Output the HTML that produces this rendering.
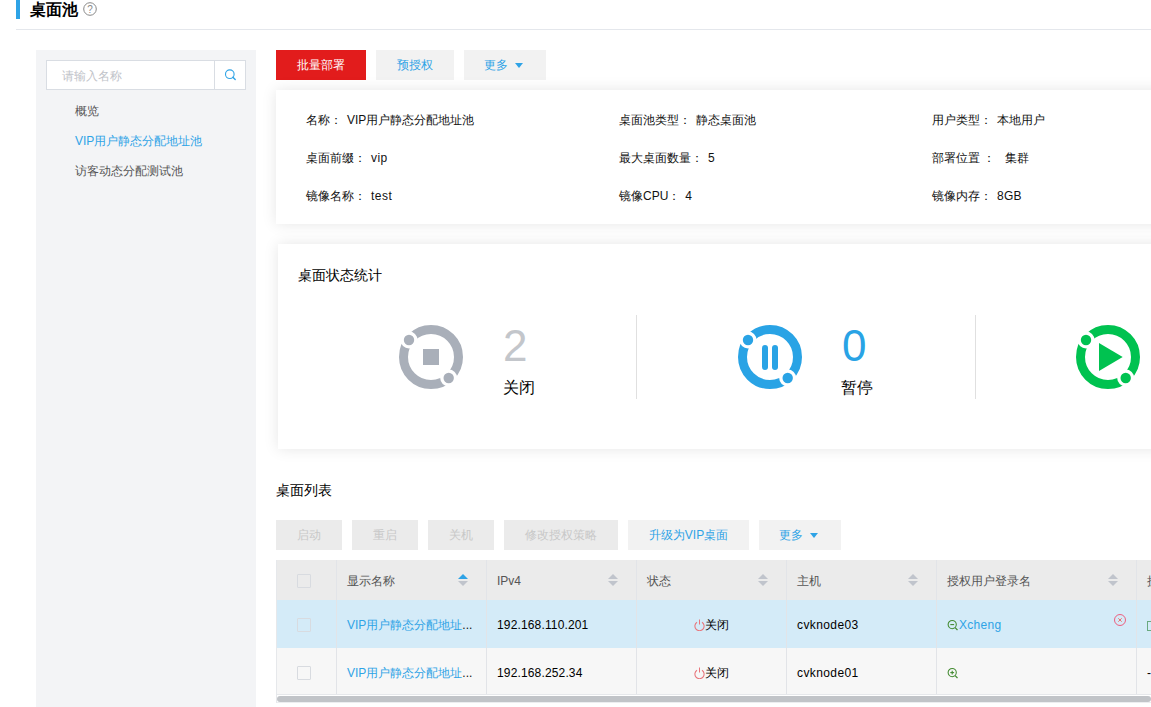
<!DOCTYPE html>
<html><head><meta charset="utf-8">
<style>
*{margin:0;padding:0;box-sizing:border-box;}
html,body{width:1151px;height:707px;overflow:hidden;background:#fff;font-family:"Liberation Sans",sans-serif;font-size:12px;color:#333;}
.a{position:absolute;white-space:nowrap;}
#bar{left:16px;top:0;width:4px;height:19px;background:#2ea3e6;}
#title{left:30px;top:0px;font-size:16px;font-weight:bold;color:#000;line-height:20px;}
#help{left:83px;top:2px;width:14px;height:14px;}
#hline{left:16px;top:29px;width:1135px;height:1px;background:#e4e7ec;}
#side{left:36px;top:50px;width:220px;height:657px;background:#f3f4f6;}
#search{left:46px;top:60px;width:200px;height:30px;background:#fff;border:1px solid #d9dde3;}
#search .ph{position:absolute;left:15px;top:7px;color:#bfc3c9;}
#search .btn{position:absolute;left:167px;top:0;width:31px;height:28px;border-left:1px solid #d9dde3;}
.nav{left:75px;color:#555;line-height:14px;}
.btn1{position:absolute;height:30px;line-height:30px;text-align:center;background:#f2f2f2;color:#2ea3e6;}
.btn2{position:absolute;top:520px;height:30px;line-height:30px;text-align:center;background:#ebebeb;color:#c8c8c8;}
.card{position:absolute;background:#fff;box-shadow:0 0 14px rgba(0,0,0,0.1);}
.lbl{color:#111;line-height:14px;}
.lbl b{font-weight:normal;}
.num{font-size:44px;line-height:44px;}
.st{font-size:16px;color:#000;line-height:18px;}
.vdiv{width:1px;height:84px;top:315px;background:#e0e0e0;}
.th{top:560px;height:40px;background:#ebebeb;}
.r1{top:600px;height:48px;background:#d4ebf8;}
.r2{top:648px;height:46px;background:#f7f7f7;}
.cd{width:1px;top:560px;height:135px;background:#e2e4e8;}
.cb{width:14px;height:14px;border:1px solid #d8dbe0;background:transparent;border-radius:1px;}
.ht{color:#555;line-height:14px;top:574px;}
.td{color:#000;line-height:14px;}
</style></head><body>
<div id="bar" class="a"></div>
<div id="title" class="a">桌面池</div>
<svg id="help" class="a" viewBox="0 0 14 14"><circle cx="7" cy="7" r="6.3" fill="none" stroke="#888" stroke-width="1"/><text x="7" y="10.5" font-size="10" text-anchor="middle" fill="#888" font-family="Liberation Sans">?</text></svg>
<div id="hline" class="a"></div>
<div id="side" class="a"></div>
<div id="search" class="a"><span class="ph">请输入名称</span><div class="btn"><svg width="31" height="28" viewBox="0 0 31 28"><circle cx="14.8" cy="13.2" r="4.3" fill="none" stroke="#2ea3e6" stroke-width="1.1"/><line x1="17.9" y1="16.3" x2="20.2" y2="18.6" stroke="#2ea3e6" stroke-width="1.4" stroke-linecap="round"/></svg></div></div>
<div class="a nav" style="top:104px;">概览</div>
<div class="a nav" style="top:134px;color:#2ea3e6;">VIP用户静态分配地址池</div>
<div class="a nav" style="top:164px;">访客动态分配测试池</div>

<div class="btn1" style="left:276px;top:50px;width:90px;background:#e21c1c;color:#fff;">批量部署</div>
<div class="btn1" style="left:376px;top:50px;width:78px;">预授权</div>
<div class="btn1" style="left:464px;top:50px;width:82px;text-indent:-3px;">更多 <svg width="8" height="5" style="vertical-align:1px;margin-left:3px;"><path d="M0 0H8L4 5Z" fill="#2ea3e6"/></svg></div>

<div class="card" style="left:276px;top:90px;width:1000px;height:134px;"></div>
<div class="a lbl" style="left:306px;top:113px;">名称：<span style="margin-left:5px">VIP用户静态分配地址池</span></div>
<div class="a lbl" style="left:306px;top:151px;">桌面前缀：<span style="margin-left:5px;letter-spacing:0.4px">vip</span></div>
<div class="a lbl" style="left:306px;top:189px;">镜像名称：<span style="margin-left:5px;letter-spacing:0.5px">test</span></div>
<div class="a lbl" style="left:619px;top:113px;">桌面池类型：<span style="margin-left:5px">静态桌面池</span></div>
<div class="a lbl" style="left:619px;top:151px;">最大桌面数量：<span style="margin-left:5px">5</span></div>
<div class="a lbl" style="left:619px;top:189px;">镜像CPU：<span style="margin-left:5px">4</span></div>
<div class="a lbl" style="left:932px;top:113px;">用户类型：<span style="margin-left:5px">本地用户</span></div>
<div class="a lbl" style="left:932px;top:151px;">部署位置 ：<span style="margin-left:10px">集群</span></div>
<div class="a lbl" style="left:932px;top:189px;">镜像内存：<span style="margin-left:5px;letter-spacing:0.3px">8GB</span></div>

<div class="card" style="left:278px;top:244px;width:1000px;height:205px;"></div>
<div class="a" style="left:298px;top:268px;font-size:14px;color:#000;line-height:14px;">桌面状态统计</div>

<!-- stop icon -->
<svg class="a" style="left:399px;top:325px;" width="64" height="64" viewBox="0 0 64 64">
<circle cx="32" cy="32" r="27.5" fill="none" stroke="#a9afb9" stroke-width="9"/>
<circle cx="10" cy="15" r="8.5" fill="#fff"/><circle cx="49.7" cy="53" r="8.5" fill="#fff"/>
<circle cx="10" cy="15" r="5.2" fill="#a9afb9"/><circle cx="49.7" cy="53" r="5.2" fill="#a9afb9"/>
<rect x="24" y="24" width="16" height="16" fill="#a9afb9"/>
</svg>
<div class="a num" style="left:503px;top:324px;color:#c3c6cb;">2</div>
<div class="a st" style="left:503px;top:379px;">关闭</div>
<div class="a vdiv" style="left:636px;"></div>

<!-- pause icon -->
<svg class="a" style="left:738px;top:325px;" width="64" height="64" viewBox="0 0 64 64">
<circle cx="32" cy="32" r="27.5" fill="none" stroke="#29a3e5" stroke-width="9"/>
<circle cx="10" cy="15" r="8.5" fill="#fff"/><circle cx="49.7" cy="53" r="8.5" fill="#fff"/>
<circle cx="10" cy="15" r="5.2" fill="#29a3e5"/><circle cx="49.7" cy="53" r="5.2" fill="#29a3e5"/>
<line x1="27" y1="23" x2="27" y2="42" stroke="#29a3e5" stroke-width="6" stroke-linecap="round"/>
<line x1="37" y1="23" x2="37" y2="42" stroke="#29a3e5" stroke-width="6" stroke-linecap="round"/>
</svg>
<div class="a num" style="left:842px;top:324px;color:#29a3e5;">0</div>
<div class="a st" style="left:841px;top:379px;">暂停</div>
<div class="a vdiv" style="left:975px;"></div>

<!-- play icon -->
<svg class="a" style="left:1076px;top:325px;" width="64" height="64" viewBox="0 0 64 64">
<circle cx="32" cy="32" r="27.5" fill="none" stroke="#00c250" stroke-width="9"/>
<circle cx="10" cy="15" r="8.5" fill="#fff"/><circle cx="49.7" cy="53" r="8.5" fill="#fff"/>
<circle cx="10" cy="15" r="5.2" fill="#00c250"/><circle cx="49.7" cy="53" r="5.2" fill="#00c250"/>
<path d="M23 18V46L46.7 32Z" fill="#00c250"/>
</svg>

<div class="a" style="left:276px;top:483px;font-size:14px;color:#000;line-height:14px;">桌面列表</div>
<div class="btn2" style="left:276px;width:66px;">启动</div>
<div class="btn2" style="left:352px;width:66px;">重启</div>
<div class="btn2" style="left:428px;width:66px;">关机</div>
<div class="btn2" style="left:504px;width:114px;">修改授权策略</div>
<div class="btn2" style="left:628px;width:121px;background:#f2f2f2;color:#2ea3e6;">升级为VIP桌面</div>
<div class="btn2" style="left:759px;width:82px;background:#f2f2f2;color:#2ea3e6;text-indent:-3px;">更多 <svg width="8" height="5" style="vertical-align:1px;margin-left:3px;"><path d="M0 0H8L4 5Z" fill="#2ea3e6"/></svg></div>

<div class="a th" style="left:276px;width:875px;"></div>
<div class="a r1" style="left:276px;width:875px;"></div>
<div class="a r2" style="left:276px;width:875px;"></div>
<div class="a cd" style="left:336px;"></div>
<div class="a cd" style="left:486px;"></div>
<div class="a cd" style="left:636px;"></div>
<div class="a cd" style="left:786px;"></div>
<div class="a cd" style="left:936px;"></div>
<div class="a cd" style="left:1136px;"></div>
<div class="a" style="left:276px;top:694px;width:875px;height:1px;background:#e6e8eb;"></div>
<div class="a" style="left:277px;top:696px;width:874px;height:6px;background:#c1c4c8;border-radius:3px;"></div>
<div class="a" style="left:276px;top:702px;width:875px;height:1px;background:#eceef0;"></div>
<div class="a" style="left:276px;top:560px;width:1px;height:143px;background:#e6e8eb;"></div>

<div class="a cb" style="left:297px;top:574px;"></div>
<div class="a cb" style="left:297px;top:618px;"></div>
<div class="a cb" style="left:297px;top:666px;"></div>

<div class="a ht" style="left:347px;">显示名称</div>
<div class="a ht" style="left:497px;">IPv4</div>
<div class="a ht" style="left:647px;">状态</div>
<div class="a ht" style="left:797px;">主机</div>
<div class="a ht" style="left:947px;">授权用户登录名</div>
<div class="a ht" style="left:1147px;">授</div>

<svg class="a" style="left:458px;top:574px;" width="10" height="12"><path d="M0 5L5 0L10 5Z" fill="#2ea3e6"/><path d="M0 7L5 12L10 7Z" fill="#c0c4cc"/></svg>
<svg class="a" style="left:608px;top:574px;" width="10" height="12"><path d="M0 5L5 0L10 5Z" fill="#c0c4cc"/><path d="M0 7L5 12L10 7Z" fill="#c0c4cc"/></svg>
<svg class="a" style="left:758px;top:574px;" width="10" height="12"><path d="M0 5L5 0L10 5Z" fill="#c0c4cc"/><path d="M0 7L5 12L10 7Z" fill="#c0c4cc"/></svg>
<svg class="a" style="left:908px;top:574px;" width="10" height="12"><path d="M0 5L5 0L10 5Z" fill="#c0c4cc"/><path d="M0 7L5 12L10 7Z" fill="#c0c4cc"/></svg>
<svg class="a" style="left:1108px;top:574px;" width="10" height="12"><path d="M0 5L5 0L10 5Z" fill="#c0c4cc"/><path d="M0 7L5 12L10 7Z" fill="#c0c4cc"/></svg>

<div class="a td" style="left:347px;top:618px;color:#2ea3e6;">VIP用户静态分配地址<span style="color:#111">...</span></div>
<div class="a td" style="left:497px;top:618px;letter-spacing:0.15px;">192.168.110.201</div>
<div class="a td" style="left:694px;top:618px;"><svg width="11" height="12" style="vertical-align:-2px"><path d="M3 3.2A4.6 4.6 0 1 0 8 3.2" fill="none" stroke="#e8767c" stroke-width="1.05"/><line x1="5.5" y1="0.5" x2="5.5" y2="5.5" stroke="#e8767c" stroke-width="1.05"/></svg>关闭</div>
<div class="a td" style="left:797px;top:618px;letter-spacing:0.4px;">cvknode03</div>
<div class="a td" style="left:947px;top:618px;color:#2ea3e6;letter-spacing:0.3px;"><svg width="12" height="13" style="vertical-align:-3px"><circle cx="5.2" cy="5.6" r="4.1" fill="none" stroke="#428a30" stroke-width="1.05"/><line x1="3.3" y1="5.6" x2="7.1" y2="5.6" stroke="#428a30" stroke-width="1.1"/><line x1="8.1" y1="8.6" x2="10.5" y2="11" stroke="#428a30" stroke-width="1.2"/></svg>Xcheng</div>
<svg class="a" style="left:1114px;top:614px;" width="12" height="12"><circle cx="6" cy="6" r="5.5" fill="none" stroke="#ef4f72" stroke-width="0.9"/><path d="M4.3 4.3L7.7 7.7M7.7 4.3L4.3 7.7" stroke="#f0605a" stroke-width="0.9"/></svg>
<div class="a" style="left:1147px;top:621px;width:8px;height:10px;border:1px solid #6aaa80;"></div>

<div class="a td" style="left:347px;top:666px;color:#2ea3e6;">VIP用户静态分配地址<span style="color:#111">...</span></div>
<div class="a td" style="left:497px;top:666px;letter-spacing:0.15px;">192.168.252.34</div>
<div class="a td" style="left:694px;top:666px;"><svg width="11" height="12" style="vertical-align:-2px"><path d="M3 3.2A4.6 4.6 0 1 0 8 3.2" fill="none" stroke="#e8767c" stroke-width="1.05"/><line x1="5.5" y1="0.5" x2="5.5" y2="5.5" stroke="#e8767c" stroke-width="1.05"/></svg>关闭</div>
<div class="a td" style="left:797px;top:666px;letter-spacing:0.4px;">cvknode01</div>
<div class="a td" style="left:947px;top:666px;"><svg width="12" height="13" style="vertical-align:-3px"><circle cx="5.2" cy="5.6" r="4.1" fill="none" stroke="#428a30" stroke-width="1.05"/><line x1="3.3" y1="5.6" x2="7.1" y2="5.6" stroke="#428a30" stroke-width="1.1"/><line x1="5.2" y1="3.7" x2="5.2" y2="7.5" stroke="#428a30" stroke-width="1.1"/><line x1="8.1" y1="8.6" x2="10.5" y2="11" stroke="#428a30" stroke-width="1.2"/></svg></div>
<div class="a td" style="left:1147px;top:666px;">-</div>
</body></html>
